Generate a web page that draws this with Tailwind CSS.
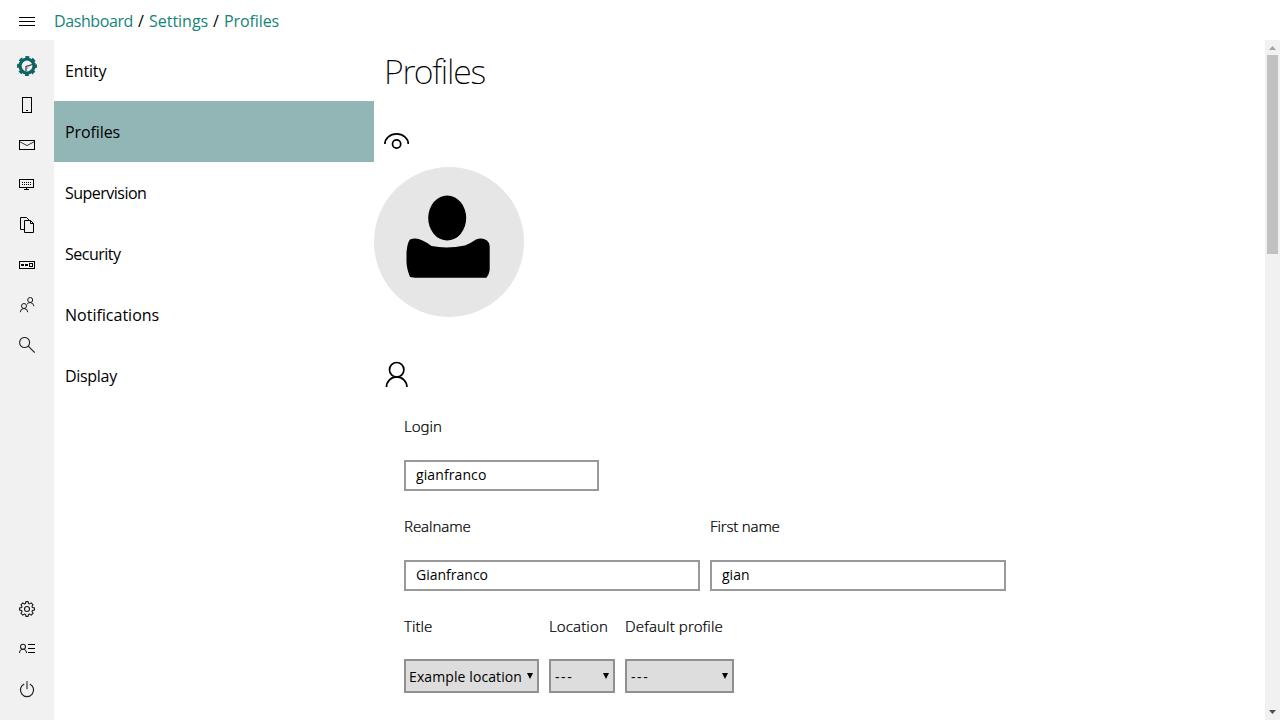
<!DOCTYPE html>
<html lang="en">
<head>
<meta charset="utf-8">
<title>Profiles</title>
<script src="https://cdn.jsdelivr.net/npm/@tailwindcss/browser@4"></script>
</head>
<body class="h-screen overflow-hidden bg-white text-black font-['Open_Sans',sans-serif] text-base flex flex-col">
<header class="h-10 shrink-0 flex items-center">
  <button class="w-[54px] h-10 flex justify-center items-center pt-0.5">
    <svg class="size-4" viewBox="0 0 16 16" stroke="#000"><path d="M0 4.500h16M0 8.500h16M0 12.500h16"/></svg>
  </button>
  <nav class="flex whitespace-pre leading-10 pt-px"><a class="text-[#128577] w-[79px] tracking-[-0.4px]">Dashboard</a><span class="w-4 text-center">/</span><a class="text-[#128577] w-[59px] tracking-[-0.02px]">Settings</a><span class="w-4 text-center">/</span><a class="text-[#128577] tracking-[-0.1px]">Profiles</a></nav>
</header>
<div class="flex flex-1 min-h-0">
  <aside class="w-[54px] shrink-0 bg-[#f1f1f1] flex flex-col pt-[5px] pb-[11px]">
    <a class="h-10 flex justify-center items-center pt-0.5">
      <svg class="size-[20px]" viewBox="0 0 20 20"><circle cx="10" cy="10" r="7" fill="#f1f1f1" stroke="#0b6463" stroke-width="3.2"/><circle cx="10" cy="10" r="9" fill="none" stroke="#0b6463" stroke-width="1.900" stroke-dasharray="4 3.070" stroke-dashoffset="2"/><path d="M9 15V10.400L18.500 7.500" fill="none" stroke="#444" stroke-width="1.300"/><path d="M10.500 13V11.200L13 10.300" fill="none" stroke="#aaa" stroke-width=".8"/></svg>
    </a>
    <a class="h-10 flex justify-center items-center"><svg class="size-4" viewBox="0 0 16 16" fill="none" stroke="#000"><rect x="3.500" y=".5" width="9" height="15"/><path d="M7 13.500h2"/></svg></a>
    <a class="h-10 flex justify-center items-center"><svg class="size-4" viewBox="0 0 16 16" fill="none" stroke="#000"><rect x=".5" y="3.500" width="15" height="9"/><path d="M1 4.800L8 8.600l7-3.800" stroke="#333"/></svg></a>
    <a class="h-10 flex justify-center items-center"><svg class="size-4" viewBox="0 0 16 16" fill="none" stroke="#000"><rect x=".5" y="2.500" width="14" height="8"/><path d="M7.500 11v1M5 12.500h5"/><path d="M3 5.500h10M3 7.500h10" stroke-dasharray="1 1"/></svg></a>
    <a class="h-10 flex justify-center items-center"><svg class="size-4" viewBox="0 0 16 16" fill="none" stroke="#000"><path d="M5 12.500H1.500V.500H7.500L10 3"/><path d="M5.500 3.500H11.500L14.500 6.500V15.500H5.500zM11.500 3.500V6.500H14.500"/></svg></a>
    <a class="h-10 flex justify-center items-center"><svg class="size-4" viewBox="0 0 16 16" fill="none" stroke="#000"><rect x=".5" y="4.500" width="15" height="7"/><path d="M2 8h3M6 8h3" stroke-width="1.800"/><rect x="10.500" y="6.500" width="3" height="3"/></svg></a>
    <a class="h-10 flex justify-center items-center"><svg class="size-4" viewBox="0 0 16 16" fill="none" stroke="#1a1a1a"><circle cx="11.200" cy="3" r="2.500"/><circle cx="5" cy="9" r="2.500"/><path d="M1.300 15.200a3.700 3.700 0 0 1 7.400 0M8 7.200Q9.500 5.500 11.200 5.500Q14.400 5.700 14.900 9.200"/></svg></a>
    <a class="h-10 flex justify-center items-center"><svg class="size-4" viewBox="0 0 16 16" fill="none" stroke="#222" stroke-width="1.100"><circle cx="5.600" cy="5.500" r="5"/><path d="M9.200 9.100l6.500 6.500"/></svg></a>
    <a class="mt-auto h-10 flex justify-center items-center"><svg class="size-4" viewBox="0 0 16 16" fill="none" stroke="#1a1a1a" stroke-width="1.100" stroke-linejoin="round"><circle cx="8" cy="8" r="2.500"/><path d="M6.900 .6h2.200l.4 1.900 1 .4L12.200 1.900l1.900 1.900-1.100 1.700.4 1 2 .4v2.200l-2 .4-.4 1 1.100 1.700-1.900 1.900-1.700-1.100-1 .4-.4 2H6.900l-.4-2-1-.4-1.700 1.100-1.900-1.900L3 10.500l-.4-1-2-.4V6.900l2-.4.4-1L1.900 3.800l1.900-1.900L5.500 3l1-.4z"/></svg></a>
    <a class="h-10 flex justify-center items-center"><svg class="size-4" viewBox="0 0 16 16" fill="none" stroke="#000"><path d="M9 3.500h7M9 7.500h7M9 11.500h7"/><g stroke="#222" stroke-width="1.100"><circle cx="4" cy="5.700" r="2.500"/><path d="M.5 12a3.500 3.700 0 0 1 7 0"/></g></svg></a>
    <a class="h-10 flex justify-center items-center"><svg class="size-4 overflow-visible" viewBox="0 0 16 16" fill="none" stroke="#222" stroke-width="1.200"><path d="M5.200 3a6.600 6.600 0 1 0 5.600 0"/><path d="M8 0v8.300" stroke="#555" stroke-width="1.400"/></svg></a>
  </aside>
  <nav class="w-80 shrink-0 leading-[61px]">
    <a class="block h-[61px] pl-[11px] pt-px tracking-[-0.15px]">Entity</a>
    <a class="block h-[61px] pl-[11px] pt-px bg-[#92b5b5] tracking-[-0.1px]">Profiles</a>
    <a class="block h-[61px] pl-[11px] pt-px tracking-[-0.52px]">Supervision</a>
    <a class="block h-[61px] pl-[11px] pt-px tracking-[-0.5px]">Security</a>
    <a class="block h-[61px] pl-[11px] pt-px">Notifications</a>
    <a class="block h-[61px] pl-[11px] pt-px tracking-[-0.3px]">Display</a>
  </nav>
  <main class="flex-1 min-w-0">
    <h1 class="h-[62px] pl-[10px] text-[34px] leading-[62px] font-[200] tracking-[-1.2px] font-['Noto_Sans',sans-serif]">Profiles</h1>
    <div class="h-[65px] pl-2.5 pt-[29px]">
      <svg class="w-[26px] h-[20px]" viewBox="0 0 26 20" fill="none" stroke="#000" stroke-width="1.700"><path d="M.9 13a11.700 10.200 0 0 1 23.400 0"/><circle cx="12.600" cy="13" r="4.100"/></svg>
    </div>
    <svg class="block size-[150px]" viewBox="0 0 150 150"><circle cx="75" cy="75" r="75" fill="#e6e6e6"/><ellipse cx="73.200" cy="51" rx="19" ry="22.500"/><path d="M36 72.500Q42 70 48.500 73.500Q54 76 57.500 79Q73 82 91 78.500Q97 76 102 72.500Q108 70 113 73.500Q116 76 115.700 80V103Q115 108 112.500 110.800H41L36 110Q32.500 101 32.500 95V85Q33.500 75 36 72.500z"/></svg>
    <div class="h-[90px] pl-2.5 pt-[44px]">
      <svg class="w-[26px] h-[27px]" viewBox="0 0 26 27" fill="none" stroke="#000" stroke-width="1.700"><circle cx="12.700" cy="8.700" r="7.200"/><path d="M2.500 26a10.200 10.200 0 0 1 20.400 0"/></svg>
    </div>
    <form class="pl-[30px]">
      <div class="h-[100px]">
        <label class="block h-[53px] leading-[38px] text-[15px] font-light [-webkit-text-stroke:0.2px] font-['Noto_Sans',sans-serif]">Login</label>
        <div class="w-[195px] h-[31px] border-2 border-[#999] px-2.5 text-sm leading-[26px] tracking-[0.1px]">gianfranco</div>
      </div>
      <div class="h-[100px] flex gap-2.5">
        <div>
          <label class="block h-[53px] leading-[38px] text-[15px] font-light [-webkit-text-stroke:0.2px] tracking-[-0.1px] font-['Noto_Sans',sans-serif]">Realname</label>
          <div class="w-[296px] h-[31px] border-2 border-[#999] px-2.5 text-sm leading-[26px]">Gianfranco</div>
        </div>
        <div>
          <label class="block h-[53px] leading-[38px] text-[15px] font-light [-webkit-text-stroke:0.2px] tracking-[-0.2px] font-['Noto_Sans',sans-serif]">First name</label>
          <div class="w-[296px] h-[31px] border-2 border-[#999] px-2.5 text-sm leading-[26px]">gian</div>
        </div>
      </div>
      <div class="flex gap-2.5">
        <div class="w-[135px]">
          <label class="block h-[52px] leading-[38px] text-[15px] font-light [-webkit-text-stroke:0.2px] font-['Noto_Sans',sans-serif]">Title</label>
          <div class="h-[34px] border-2 border-[#909090] bg-[#ddd] flex justify-between pl-[3px] pr-1 text-sm leading-[32px] tracking-[0.1px]"><span class="whitespace-nowrap">Example location</span><svg class="w-1.5 h-[6px] mt-3 shrink-0" viewBox="0 0 6 6"><path d="M0 0h6L3 6z"/></svg></div>
        </div>
        <div class="w-[66px]">
          <label class="block h-[52px] leading-[38px] text-[15px] font-light [-webkit-text-stroke:0.2px] font-['Noto_Sans',sans-serif] tracking-[0.1px]">Location</label>
          <div class="h-[34px] border-2 border-[#909090] bg-[#ddd] flex justify-between pl-1 pr-1 text-sm leading-[32px] tracking-[1.6px]"><span>---</span><svg class="w-1.5 h-[6px] mt-3 shrink-0" viewBox="0 0 6 6"><path d="M0 0h6L3 6z"/></svg></div>
        </div>
        <div class="w-[109px]">
          <label class="block h-[52px] leading-[38px] text-[15px] font-light [-webkit-text-stroke:0.2px] font-['Noto_Sans',sans-serif] tracking-[0.1px]">Default profile</label>
          <div class="h-[34px] border-2 border-[#909090] bg-[#ddd] flex justify-between pl-1 pr-1 text-sm leading-[32px] tracking-[1.6px]"><span>---</span><svg class="w-1.5 h-[6px] mt-3 shrink-0" viewBox="0 0 6 6"><path d="M0 0h6L3 6z"/></svg></div>
        </div>
      </div>
    </form>
  </main>
  <div class="w-[15px] shrink-0 bg-[#f1f1f1] flex flex-col items-center">
    <svg class="w-[7px] h-[15px] shrink-0" viewBox="0 0 7 15"><path d="M3.500 6L7 10H0z" fill="#a3a3a3"/></svg>
    <div class="w-[11px] h-[199px] bg-[#c1c1c1]"></div>
    <svg class="mt-auto w-[7px] h-[15px] shrink-0" viewBox="0 0 7 15"><path d="M0 5h7L3.500 9z" fill="#505050"/></svg>
  </div>
</div>
</body>
</html>
